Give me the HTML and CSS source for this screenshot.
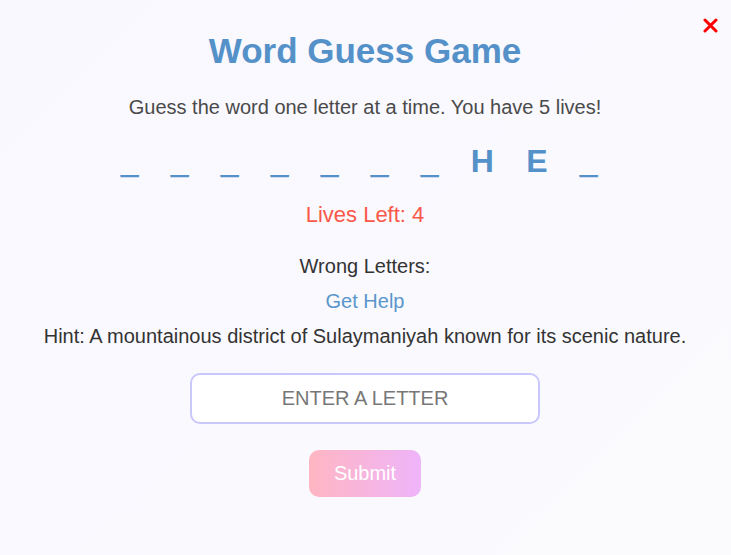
FILE: index.html
```html
<!DOCTYPE html>
<html lang="en">
<head>
<meta charset="utf-8">
<title>Word Guess Game</title>
<link rel="stylesheet" href="styles.css">
</head>
<body>
<main class="game">
  <button class="close" aria-label="Close">
    <svg width="15" height="15" viewBox="0 0 15 15"><path d="M2 2 L13 13 M13 2 L2 13" stroke="#f00" stroke-width="3" stroke-linecap="round"/></svg>
  </button>
  <h1 class="title">Word Guess Game</h1>
  <p class="intro">Guess the word one letter at a time. You have 5 lives!</p>
  <div class="word"><span class="blank">_</span> <span class="blank">_</span> <span class="blank">_</span> <span class="blank">_</span> <span class="blank">_</span> <span class="blank">_</span> <span class="blank">_</span> <span>H</span> <span>E</span> <span class="blank">_</span></div>
  <p class="lives">Lives Left: 4</p>
  <p class="wrong">Wrong Letters:</p>
  <a class="help" href="#">Get Help</a>
  <p class="hint">Hint: A mountainous district of Sulaymaniyah known for its scenic nature.</p>
  <input class="letter" type="text" maxlength="1" placeholder="Enter a letter">
  <button class="submit">Submit</button>
</main>
</body>
</html>
```

FILE: styles.css
```css
html, body {
  margin: 0;
  padding: 0;
  height: 100%;
}
body {
  background: linear-gradient(135deg, #f8f8fe 0%, #f9f9fe 60%, #fbfbfd 100%);
  font-family: "Liberation Sans", Arial, sans-serif;
  color: #333;
}
.game {
  position: relative;
  display: flex;
  flex-direction: column;
  align-items: center;
  padding-top: 31px;
  padding-right: 1px;
  text-align: center;
}
.close {
  position: absolute;
  top: 18px;
  right: 13px;
  width: 15px;
  height: 15px;
  padding: 0;
  border: 0;
  background: none;
  display: block;
}
.close svg { display: block; }
.title {
  margin: 0;
  font-size: 35px;
  line-height: 40px;
  font-weight: bold;
  color: #5591c9;
}
.intro {
  margin: 24px 0 0;
  font-size: 20px;
  line-height: 24px;
  color: #4a4a4a;
}
.word {
  margin-top: 22px;
  font-size: 32px;
  line-height: 40px;
  font-weight: bold;
  color: #5591c9;
  letter-spacing: 11.65px;
  white-space: pre;
}
.blank {
  text-shadow: 0 1px 0 #5591c9, 0 -0.5px 0 #5591c9;
}
.lives {
  margin: 21px 0 0;
  font-size: 22px;
  line-height: 26px;
  color: #fa584a;
}
.wrong {
  margin: 26px 0 0;
  font-size: 20px;
  line-height: 24px;
  color: #333;
}
.help {
  margin-top: 11px;
  font-size: 20px;
  line-height: 24px;
  color: #5a96cc;
  text-decoration: none;
}
.hint {
  margin: 11px 0 0;
  font-size: 20px;
  line-height: 24px;
  color: #333;
}
.letter {
  margin-top: 25px;
  box-sizing: border-box;
  width: 350px;
  height: 51px;
  border: 2px solid #c9c7fb;
  border-radius: 10px;
  background: #fff;
  font-family: "Liberation Sans", Arial, sans-serif;
  font-size: 20px;
  text-align: center;
  text-transform: uppercase;
  color: #333;
  outline: none;
}
.letter::placeholder {
  color: #777;
  text-transform: uppercase;
}
.submit {
  margin-top: 26px;
  box-sizing: border-box;
  width: 112px;
  height: 47px;
  border: 0;
  border-radius: 10px;
  background: linear-gradient(90deg, #ffb6c2 0%, #efb4fa 100%);
  color: #fff;
  font-family: "Liberation Sans", Arial, sans-serif;
  font-size: 20px;
  padding: 0;
}
```
